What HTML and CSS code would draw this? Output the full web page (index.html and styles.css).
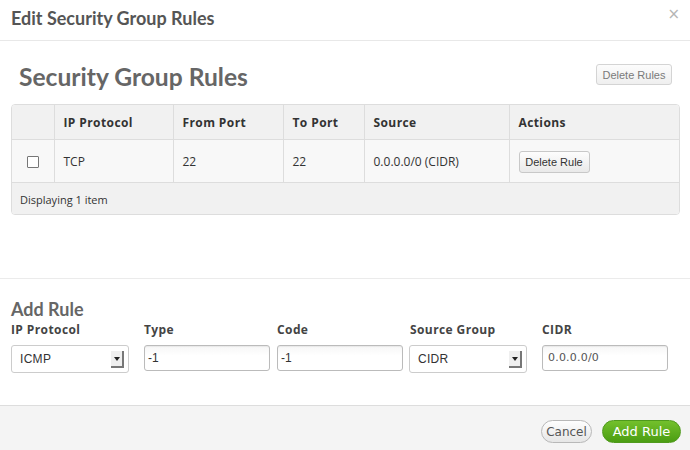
FILE: index.html
```html
<!DOCTYPE html>
<html>
<head>
<meta charset="utf-8">
<link rel="stylesheet" href="styles.css">
</head>
<body>
<div class="modal">
  <div class="modal-header">
    <h3 class="modal-title">Edit Security Group Rules</h3>
    <span class="close">&times;</span>
  </div>
  <div class="modal-body">
    <div class="rules-head">
      <h2 class="rules-title">Security Group Rules</h2>
      <button class="btn btn-small btn-disabled">Delete Rules</button>
    </div>
    <div class="table-wrap">
      <table class="rules-table">
        <colgroup>
          <col class="c-check"><col class="c-proto"><col class="c-from"><col class="c-to"><col class="c-src"><col class="c-act">
        </colgroup>
        <thead>
          <tr><th></th><th>IP Protocol</th><th>From Port</th><th>To Port</th><th>Source</th><th>Actions</th></tr>
        </thead>
        <tbody>
          <tr>
            <td class="check-cell"><span class="checkbox"></span></td>
            <td>TCP</td><td>22</td><td>22</td><td>0.0.0.0/0 (CIDR)</td>
            <td><button class="btn btn-small btn-row">Delete Rule</button></td>
          </tr>
        </tbody>
        <tfoot>
          <tr><td colspan="6" class="foot-cell">Displaying 1 item</td></tr>
        </tfoot>
      </table>
    </div>
    <div class="add-rule">
      <h3 class="add-title">Add Rule</h3>
      <div class="fields">
        <div class="field">
          <label class="field-label">IP Protocol</label>
          <div class="select"><span class="select-text">ICMP</span><span class="select-arrow"><span class="tri"></span></span></div>
        </div>
        <div class="field">
          <label class="field-label">Type</label>
          <div class="input">-1</div>
        </div>
        <div class="field">
          <label class="field-label">Code</label>
          <div class="input">-1</div>
        </div>
        <div class="field">
          <label class="field-label">Source Group</label>
          <div class="select select-src"><span class="select-text">CIDR</span><span class="select-arrow"><span class="tri"></span></span></div>
        </div>
        <div class="field">
          <label class="field-label">CIDR</label>
          <div class="input input-cidr">0.0.0.0/0</div>
        </div>
      </div>
    </div>
  </div>
  <div class="modal-footer">
    <button class="pill pill-cancel">Cancel</button>
    <button class="pill pill-primary">Add Rule</button>
  </div>
</div>
</body>
</html>
```
FILE: styles.css
```css
html, body {
  margin: 0;
  padding: 0;
  background: #fff;
}
.modal {
  width: 690px;
  height: 450px;
  display: flex;
  flex-direction: column;
  overflow: hidden;
}
.modal-header {
  height: 40px;
  border-bottom: 1px solid #e8e8e8;
  display: flex;
  justify-content: space-between;
  align-items: flex-start;
  padding: 0 10px 0 11px;
  flex: none;
}
.modal-title {
  margin: 0;
  font-family: Lato, "Open Sans", sans-serif;
  font-weight: 700;
  font-size: 18px;
  line-height: 37px;
  color: #555;
}
.close {
  font-family: "DejaVu Sans", sans-serif;
  font-size: 15px;
  line-height: 28px;
  color: #b5b5b5;
}
.modal-body {
  flex: 1;
  padding: 21px 10px 0 11px;
}
.rules-head {
  display: flex;
  justify-content: space-between;
  align-items: flex-start;
  padding: 0 8px 0 8px;
  height: 30px;
}
.rules-title {
  margin: 0;
  font-family: Lato, "Open Sans", sans-serif;
  font-weight: 700;
  font-size: 24.6px;
  line-height: 30px;
  color: #666;
}
.btn {
  font-family: "Liberation Sans", Arial, sans-serif;
  font-size: 11px;
  border: 1px solid #c8c8c8;
  border-radius: 3px;
  background: linear-gradient(#fdfdfd, #e9e9e9);
  padding: 0;
}
.btn-disabled {
  margin-top: 2px;
  width: 76px;
  height: 21px;
  color: #7a7a7a;
  border-color: #d4d4d4;
  background: linear-gradient(#fcfcfc, #efefef);
}
.btn-row {
  width: 71px;
  height: 22px;
  color: #333;
  margin-top: 2px;
}
.table-wrap {
  margin-top: 12px;
  border: 1px solid #ddd;
  border-radius: 4px;
  overflow: hidden;
}
.rules-table {
  width: 100%;
  border-collapse: collapse;
  table-layout: fixed;
  font-family: "Open Sans", sans-serif;
  font-size: 12px;
  color: #333;
}
.c-check { width: 42px; }
.c-proto { width: 119px; }
.c-from { width: 110px; }
.c-to { width: 81px; }
.c-src { width: 145px; }
.rules-table th {
  background: #f1f1f1;
  height: 34px;
  text-align: left;
  padding: 0 9px;
  font-weight: 700;
  letter-spacing: 0.4px;
  border-bottom: 1px solid #ddd;
  border-left: 1px solid #ddd;
}
.rules-table td {
  background: #f8f8f8;
  height: 42px;
  padding: 0 9px;
  border-bottom: 1px solid #ddd;
  border-left: 1px solid #ddd;
}
.rules-table th:first-child,
.rules-table td:first-child {
  border-left: none;
}
.check-cell {
  text-align: center;
}
.checkbox {
  display: inline-block;
  width: 10px;
  height: 10px;
  border: 1px solid #777;
  border-radius: 1px;
  background: #fff;
  vertical-align: middle;
}
.rules-table .foot-cell {
  background: #f1f1f1;
  height: 30px;
  font-size: 11px;
  border-bottom: none;
  padding-top: 1px;
  padding-left: 8px;
}
.add-rule {
  margin: 63px -10px 0 -11px;
  border-top: 1px solid #ebebeb;
  padding: 19px 10px 0 11px;
}
.add-title {
  margin: 0;
  font-family: Lato, "Open Sans", sans-serif;
  font-weight: 700;
  font-size: 18px;
  line-height: 22px;
  color: #666;
}
.fields {
  display: grid;
  grid-template-columns: 133px 133px 133px 132px 140px;
  margin-top: 2px;
}
.field {
  display: flex;
  flex-direction: column;
  align-items: flex-start;
}
.field-label {
  font-family: "Open Sans", sans-serif;
  font-weight: 700;
  font-size: 12px;
  line-height: 16px;
  letter-spacing: 0.4px;
  color: #444;
  margin-bottom: 7px;
}
.select {
  box-sizing: border-box;
  width: 118px;
  height: 28px;
  border: 1px solid #ccc;
  border-radius: 3px;
  background: #fff;
  display: flex;
  align-items: center;
  justify-content: space-between;
  padding: 0 4px 0 8px;
  font-family: "Liberation Sans", Arial, sans-serif;
  font-size: 12px;
  letter-spacing: 0.3px;
  color: #333;
}
.select-src {
  margin-left: -1px;
}
.select-arrow {
  box-sizing: border-box;
  width: 13px;
  height: 17px;
  border-right: 2px solid #777;
  border-bottom: 2px solid #777;
  background: #efefef;
  display: flex;
  align-items: center;
  justify-content: center;
  margin-top: 1px;
}
.tri {
  width: 0;
  height: 0;
  border-left: 3px solid transparent;
  border-right: 3px solid transparent;
  border-top: 4px solid #222;
}
.input {
  box-sizing: border-box;
  width: 126px;
  height: 26px;
  border: 1px solid #bbb;
  border-radius: 3px;
  background: linear-gradient(#f6f6f6, #fff 40%);
  box-shadow: inset 0 1px 1px rgba(0,0,0,0.06);
  padding: 0 3px;
  font-family: "Liberation Sans", Arial, sans-serif;
  font-size: 12px;
  line-height: 24px;
  color: #333;
}
.input-cidr {
  padding-left: 5px;
  font-family: "DejaVu Sans", sans-serif;
  font-size: 11px;
  letter-spacing: 0.2px;
  color: #555;
}
.modal-footer {
  flex: none;
  box-sizing: border-box;
  height: 45px;
  border-top: 1px solid #ddd;
  background: #f4f4f4;
  display: flex;
  justify-content: flex-end;
  align-items: flex-start;
  gap: 10px;
  padding: 14px 9px 0 0;
}
.pill {
  height: 23px;
  border-radius: 12px;
  font-family: "DejaVu Sans", sans-serif;
  font-size: 12px;
  padding: 0;
}
.pill-cancel {
  width: 51px;
  border: 1px solid #b8b8b8;
  background: linear-gradient(#fefefe, #e6e6e6);
  color: #555;
}
.pill-primary {
  width: 79px;
  border: 1px solid #4f9a1c;
  background: linear-gradient(#73c02c, #4b9d12);
  color: #fff;
  font-size: 13px;
}
```
